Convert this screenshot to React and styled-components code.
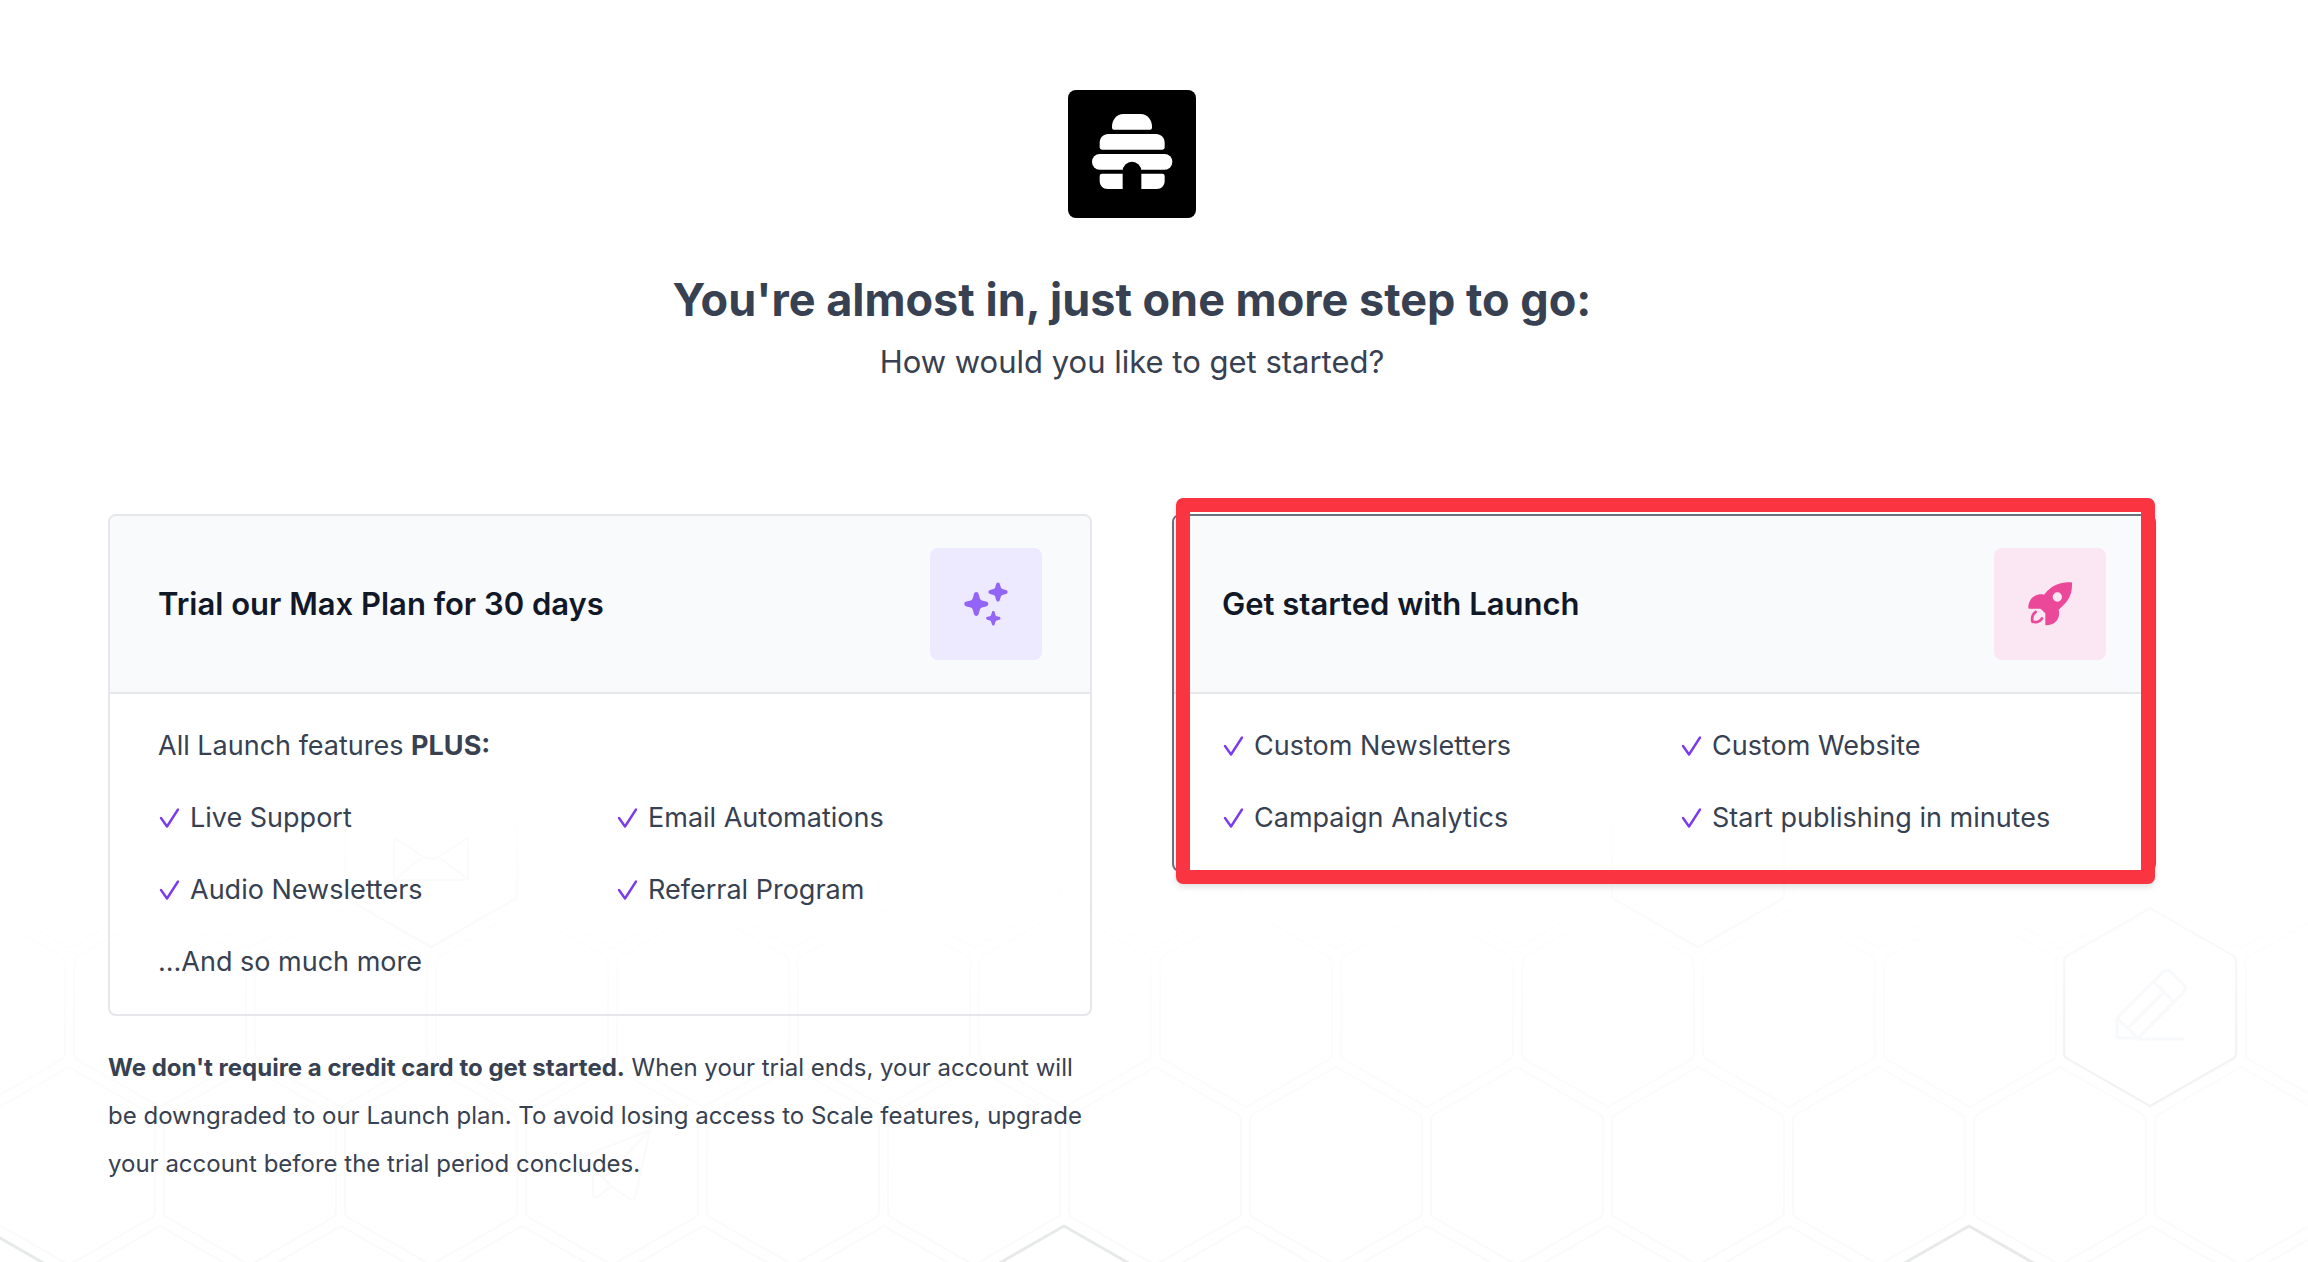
import React from 'react';
import styled, { createGlobalStyle } from 'styled-components';


const GlobalStyle = createGlobalStyle`
    * {
        box-sizing: border-box;
    }
    body {
        margin: 0;
        background: rgb(255, 255, 255);
        color: rgb(55, 65, 81);
        font-family: Inter, 'Liberation Sans', sans-serif;
    }
    h1, h2, p, ul {
        margin: 0;
        padding: 0;
    }
`
const Page = styled.main`
    position: relative;
    min-height: 100vh;
    padding: 90px 152px 64px 108px;
    overflow: hidden;
`
const Honeycomb = styled.svg`
    position: absolute;
    top: 0;
    left: 0;
    width: 100%;
    height: 100%;
    fill: none;
    stroke-width: 2;
    stroke-linejoin: round;
`
const Content = styled.div`
    position: relative;
`
const Intro = styled.header`
    display: flex;
    flex-direction: column;
    align-items: center;
    text-align: center;
`
const Logo = styled.svg`
    width: 128px;
    height: 128px;
    margin-bottom: 54px;
`
const Title = styled.h1`
    font-size: 45px;
    line-height: 56px;
    font-weight: 700;
`
const SubTitle = styled.p`
    margin-top: 14px;
    font-size: 31px;
    line-height: 40px;
`
const Plans = styled.section`
    display: grid;
    grid-template-columns: 1fr 1fr;
    gap: 80px;
    align-items: start;
    margin-top: 132px;
`
const PlanWrap = styled.div`
    position: relative;
`
const Card = styled.a`
    display: block;
    border: 2px solid ${({ $active }) => $active ? 'rgb(107, 114, 128)' : 'rgb(229, 231, 235)'};
    border-radius: 8px;
    overflow: hidden;
    color: inherit;
    text-decoration: none;
`
const CardHead = styled.div`
    display: flex;
    align-items: center;
    justify-content: space-between;
    padding: 32px 48px;
    border-bottom: 2px solid rgb(229, 231, 235);
    background: rgb(249, 250, 252);
`
const CardTitle = styled.h2`
    color: rgb(17, 24, 39);
    font-size: 31px;
    line-height: 40px;
    font-weight: 600;
`
const Tile = styled.div`
    display: flex;
    align-items: center;
    justify-content: center;
    width: 112px;
    height: 112px;
    border-radius: 8px;
    color: ${({ $color }) => $color};
    background: ${({ $background }) => $background};

    svg {
        width: 48px;
        height: 48px;
        fill: currentColor;
    }
`
const CardBody = styled.div`
    padding: 16px 48px;
    font-size: 27px;
    line-height: 72px;
`
const Features = styled.ul`
    display: grid;
    grid-template-columns: 1fr 1fr;
    column-gap: 32px;
    list-style: none;
`
const Feature = styled.li`
    display: flex;
    align-items: center;
    gap: 10px;
    white-space: nowrap;
`
const Check = styled.svg`
    width: 22px;
    height: 22px;
    fill: none;
    stroke: rgb(124, 58, 237);
    stroke-width: 2.4;
    stroke-linecap: round;
    stroke-linejoin: round;
`
const Highlight = styled.div`
    position: absolute;
    inset: -16px 1px -12px 4px;
    border: 14px solid rgb(250, 52, 65);
    border-radius: 7px;
    box-shadow: 0 3px 6px rgba(0, 0, 0, 0.12);
    pointer-events: none;
`
const Note = styled.p`
    margin-top: 28px;
    font-size: 24px;
    line-height: 48px;

    strong {
        font-weight: 700;
    }
`


const hexPath = (cx, top) =>
    `M${cx} ${top}l82 47q4 2 4 6v92q0 4-4 6l-82 47l-82-47q-4-2-4-6v-92q0-4 4-6z`;

const cells = [];
for (let row = 0; row < 5; row++) {
    const start = row % 2 === 0 ? -112 : -21;
    for (let col = 0; col < 16; col++) {
        cells.push({ x: start + col * 181, y: 750 + Math.round(row * 158.7) });
    }
}

const Background = () => {
    return <Honeycomb aria-hidden="true">
        <defs>
            <linearGradient id="fade" gradientUnits="userSpaceOnUse" x1="0" y1="840" x2="0" y2="1262">
                <stop offset="0" stopColor="#fff" />
                <stop offset="0.4" stopColor="#fcfcfc" />
                <stop offset="1" stopColor="#f9fafa" />
            </linearGradient>
            <linearGradient id="mail" gradientUnits="userSpaceOnUse" x1="0" y1="800" x2="0" y2="948">
                <stop offset="0" stopColor="#fff" />
                <stop offset="1" stopColor="#f8f9fa" />
            </linearGradient>
            <linearGradient id="pencil" gradientUnits="userSpaceOnUse" x1="0" y1="908" x2="0" y2="1106">
                <stop offset="0" stopColor="#f9fafb" />
                <stop offset="1" stopColor="#eff1f1" />
            </linearGradient>
        </defs>
        {cells.map(({ x, y }) => <path key={`${x}-${y}`} d={hexPath(x, y)} stroke="url(#fade)" />)}

        <path d={hexPath(431, 749)} stroke="url(#mail)" />
        <path d={hexPath(1698, 749)} stroke="url(#mail)" />
        <path d="M394 838v39q0 3 3 3h68q3 0 3-3v-39M394 838l30 19q7 3 14 0l30-19M396 878l26-20M466 878l-26-20" stroke="#fafbfb" />

        <path d={hexPath(2150, 908)} stroke="url(#pencil)" />
        <path d="M2117 1018l46-46q4-4 7-1l14 14q3 3 0 7l-46 46h-19q-2 0-2-2zl21 20M2154 982l20 20M2128 1028l35-35M2138 1039h46" stroke="#f8f9fb" strokeWidth="3" />

        <path d="M650 1130l-68 27 29 29 20 14q3 1 4-2zL603 1179M593 1170v24q1 5 5 3l13-11" stroke="#fafafa" />

        <path d={hexPath(-21, 1226)} stroke="#e8eaea" strokeWidth="3" />
        <path d={hexPath(1064, 1226)} stroke="#e8eaea" strokeWidth="3" />
        <path d={hexPath(1969, 1226)} stroke="#e8eaea" strokeWidth="3" />
    </Honeycomb>
}

const HiveLogo = () => {
    return <Logo viewBox="0 0 384 384" role="img" aria-label="beehiiv">
        <rect width="384" height="384" rx="24" fill="#000" />
        <g fill="#fff">
            <path d="M166 72h52c20 0 34 18 34 38v3q0 6-6 6H138q-6 0-6-6v-3c0-20 14-38 34-38z" />
            <path d="M121 132h143c15 0 26 12 26 26v14q0 7-7 7H102q-7 0-7-7v-14c0-14 11-26 26-26z" />
            <rect x="72" y="192" width="241" height="47" rx="23" />
            <path d="M102 251h181q7 0 7 7v15c0 14-10 24-24 24H119c-14 0-24-10-24-24v-15q0-7 7-7z" />
        </g>
        <path d="M164 300v-57a28 28 0 0 1 56 0v57z" fill="#000" />
    </Logo>
}

const star = 'M0-12c1.300 0 2 .9 2.400 2.200l1.200 4.200q.5 1.500 2 2l4.200 1.200c1.300.4 2.200 1.100 2.200 2.400s-.9 2-2.200 2.400l-4.200 1.200q-1.500.5-2 2l-1.200 4.200c-.4 1.300-1.100 2.200-2.400 2.200s-2-.9-2.400-2.200l-1.200-4.200q-.5-1.500-2-2l-4.200-1.200c-1.300-.4-2.200-1.100-2.200-2.400s.9-2 2.200-2.400l4.200-1.200q1.500-.5 2-2l1.200-4.200c.4-1.300 1.100-2.200 2.400-2.200z';

const Sparkles = () => {
    return <svg viewBox="0 0 48 48" aria-hidden="true">
        <path d={star} transform="translate(14.300 24)" />
        <path d={star} transform="translate(36 12) scale(0.8)" />
        <path d={star} transform="translate(31.300 38.300) scale(0.6)" />
    </svg>
}

const Rocket = () => {
    return <svg viewBox="0 0 144 144" aria-hidden="true">
        <path
            fillRule="evenodd"
            d="M136 7q2 0 2 2c1 34-8 54-40 80c6 24-8 47-38 47q-2 0-2-2v-32q0-2-2-4l-9-9q-2-3-5-3H10q-3 0-3-3c0-27 22-45 47-39C78 14 102 7 136 7zM94 37a14 14 0 1 0 0 28a14 14 0 1 0 0-28z"
        />
        <path
            fill="none"
            stroke="currentColor"
            strokeWidth="8"
            strokeLinecap="round"
            strokeLinejoin="round"
            d="M29 96c-8 5-12 15-10 29c12 3 23 0 29-10"
        />
    </svg>
}

const CheckItem = ({ children }) => {
    return <Feature>
        <Check viewBox="0 0 22 22" aria-hidden="true">
            <path d="M3 11l6 8.500L20 2.500" />
        </Check>
        {children}
    </Feature>
}


const App = () => {
    return <React.Fragment>
        <GlobalStyle />
        <Page>
            <Background />
            <Content>
                <Intro>
                    <HiveLogo />
                    <Title>You're almost in, just one more step to go:</Title>
                    <SubTitle>How would you like to get started?</SubTitle>
                </Intro>

                <Plans>
                    <PlanWrap>
                        <Card href="#max">
                            <CardHead>
                                <CardTitle>Trial our Max Plan for 30 days</CardTitle>
                                <Tile $color="rgb(147, 101, 247)" $background="rgb(237, 233, 254)">
                                    <Sparkles />
                                </Tile>
                            </CardHead>
                            <CardBody>
                                <p>All Launch features <strong>PLUS:</strong></p>
                                <Features>
                                    <CheckItem>Live Support</CheckItem>
                                    <CheckItem>Email Automations</CheckItem>
                                    <CheckItem>Audio Newsletters</CheckItem>
                                    <CheckItem>Referral Program</CheckItem>
                                </Features>
                                <p>...And so much more</p>
                            </CardBody>
                        </Card>
                        <Note>
                            <strong>We don't require a credit card to get started.</strong> When your trial ends, your account will be downgraded to our Launch plan. To avoid losing access to Scale features, upgrade your account before the trial period concludes.
                        </Note>
                    </PlanWrap>

                    <PlanWrap>
                        <Card href="#launch" $active>
                            <CardHead>
                                <CardTitle>Get started with Launch</CardTitle>
                                <Tile $color="rgb(236, 72, 153)" $background="rgb(251, 231, 243)">
                                    <Rocket />
                                </Tile>
                            </CardHead>
                            <CardBody>
                                <Features>
                                    <CheckItem>Custom Newsletters</CheckItem>
                                    <CheckItem>Custom Website</CheckItem>
                                    <CheckItem>Campaign Analytics</CheckItem>
                                    <CheckItem>Start publishing in minutes</CheckItem>
                                </Features>
                            </CardBody>
                        </Card>
                        <Highlight />
                    </PlanWrap>
                </Plans>
            </Content>
        </Page>
    </React.Fragment>
}

export default App;
